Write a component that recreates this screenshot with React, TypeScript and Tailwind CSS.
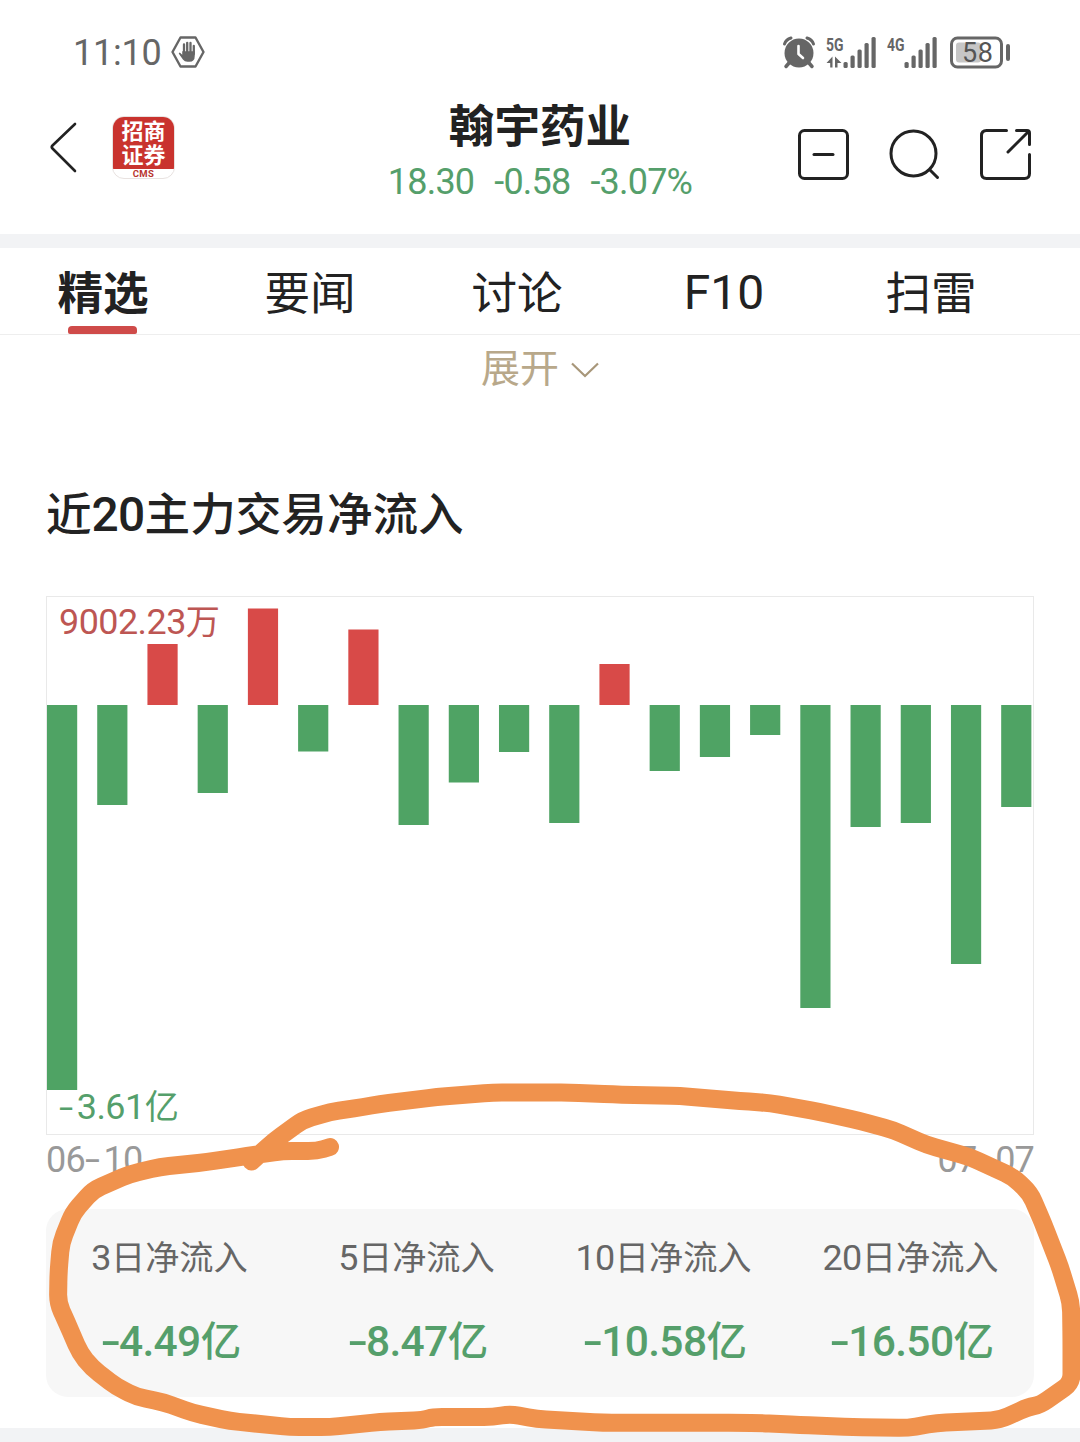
import { ReactNode } from "react";

const TABS = ["精选", "要闻", "讨论", "F10", "扫雷"];

// Signed bar heights in px, positive = inflow
const FLOWS = [
  -385, -100, 61, -88, 96.5, -46.5, 75.5, -120, -77.5, -47, -118, 41, -66, -52, -30, -303, -122,
  -118, -259, -102,
];

const SUMMARY = [
  { days: "3", value: "4.49" },
  { days: "5", value: "8.47" },
  { days: "10", value: "10.58" },
  { days: "20", value: "16.50" },
];

const MARK: [number, number][] = [
  [251.5, 1161.5], [274, 1141], [303, 1120], [330, 1112], [363, 1107], [380, 1104], [437, 1097],
  [493, 1092.5], [570, 1092.5], [613, 1094.5], [680, 1096], [740, 1101], [770, 1103], [820, 1112],
  [860, 1121], [893, 1130], [927, 1145], [970, 1157], [1013, 1177], [1030, 1193], [1043, 1223],
  [1060, 1267], [1071, 1303], [1071.5, 1340], [1071.5, 1383], [1040, 1405], [1028, 1407],
  [1000, 1420], [937, 1423], [907, 1428], [853, 1427], [800, 1425], [760, 1423], [720, 1422.7],
  [603, 1422.7], [537, 1419], [510, 1414], [493, 1417], [433, 1417], [423, 1420], [380, 1422],
  [330, 1427], [290, 1427], [230, 1421], [193, 1413], [163, 1402], [137, 1397], [117, 1387],
  [92, 1368], [80, 1353], [67, 1323], [58, 1303], [58.5, 1273], [61, 1243], [73, 1213],
  [93, 1190], [130, 1174], [160, 1167], [207, 1162], [247, 1156], [283, 1151], [317, 1151],
  [330, 1147],
];

// Joins the points with straight runs and rounds each corner by up to 9px
function smooth(points: [number, number][]) {
  const toward = (a: [number, number], b: [number, number]) => {
    const len = Math.hypot(b[0] - a[0], b[1] - a[1]);
    const t = Math.min(9, len / 2) / len;
    return `${a[0] + (b[0] - a[0]) * t} ${a[1] + (b[1] - a[1]) * t}`;
  };
  let d = `M${points[0].join(" ")}`;
  for (let i = 1; i < points.length - 1; i++) {
    const p = points[i];
    d += ` L${toward(p, points[i - 1])} Q${p.join(" ")} ${toward(p, points[i + 1])}`;
  }
  return `${d} L${points[points.length - 1].join(" ")}`;
}

// Digits are set slightly larger than the Chinese text beside them
function Num({ children }: { children: ReactNode }) {
  return <span className="text-[1.05em] tracking-[-0.015em]">{children}</span>;
}

// Wide minus sign used in the chart and the summary figures
function Minus() {
  return <span className="mr-[0.1em] inline-block w-[0.42em] origin-left scale-x-150">-</span>;
}

function Signal({ label, data }: { label: string; data?: boolean }) {
  return (
    <svg className="overflow-visible" width="52" height="34" viewBox="0 0 52 34" fill="#666">
      <text
        x="0"
        y="14.500"
        fontSize="18"
        fontWeight="700"
        textLength="17.500"
        lengthAdjust="spacingAndGlyphs"
      >
        {label}
      </text>
      {data && (
        <path d="M6.500 20.500 V31.500 H4.200 V27 H0.500 Z M9 20.500 L15.500 27 H11.500 V31.500 H9 Z" />
      )}
      <rect x="17.500" y="26" width="4.200" height="6" rx="1.500" />
      <rect x="24.500" y="19.500" width="4.200" height="12.500" rx="1.500" />
      <rect x="31.500" y="13.500" width="4.200" height="18.500" rx="1.500" />
      <rect x="38.500" y="7" width="4.200" height="25" rx="1.500" />
      <rect x="45.500" y="1" width="4.200" height="31" rx="1.500" />
    </svg>
  );
}

function StatusBar() {
  return (
    <div className="flex h-[90px] items-start pt-9 pl-[73px] text-[#666]">
      <span className="w-[98px] text-[36px] leading-[34px] tracking-[-0.2px]">11:10</span>
      <svg width="34" height="32" viewBox="0 0 34 32">
        <path
          d="M9.500 1.500 H24.500 L32.500 16 L24.500 30.500 H9.500 L1.500 16 Z"
          fill="none"
          stroke="#666"
          strokeWidth="2.400"
          strokeLinejoin="round"
        />
        <g stroke="#666" strokeWidth="2.300" strokeLinecap="round" fill="#666">
          <path d="M13 8.500 V18 M16.200 6.800 V17 M19.500 7 V17 M22.800 10 V18" />
          <path d="M8.300 17 L12 20.500 V16 H23 V20 Q23 25 18.500 25 H16.500 Q14 25 12.500 23 Z" strokeWidth="1.500" />
        </g>
      </svg>
      <svg className="ml-[577px]" width="34" height="34" viewBox="0 0 34 34">
        <circle cx="17" cy="17" r="14.500" fill="#666" />
        <path d="M2.500 8 Q4 3.500 9 2 M25 2 Q30 3.500 31.500 8" fill="none" stroke="#666" strokeWidth="3" strokeLinecap="round" />
        <path d="M7 27 L4 30.500 M27 27 L30 30.500" stroke="#666" strokeWidth="3.500" strokeLinecap="round" />
        <path d="M16.500 10 V18 L21 22" fill="none" stroke="#fff" strokeWidth="2.600" strokeLinecap="round" strokeLinejoin="round" />
      </svg>
      <div className="ml-[10px] flex gap-[9px]">
        <Signal label="5G" data />
        <Signal label="4G" />
      </div>
      <svg className="ml-[11px]" width="62" height="34" viewBox="0 0 62 34">
        <rect x="1.500" y="2" width="50" height="29" rx="6" fill="none" stroke="#666" strokeWidth="3" />
        <rect x="6" y="6.500" width="25" height="20" rx="3" fill="#c6c6c6" />
        <rect x="56" y="8" width="4" height="17" rx="2" fill="#666" />
        <text x="12" y="26" fontSize="27" fill="#555" textLength="31">
          58
        </text>
      </svg>
    </div>
  );
}

function Header() {
  return (
    <header className="flex h-36 items-start">
      <div className="flex w-[360px] pt-[26px] pl-[49px]">
        <svg className="mt-[5px]" width="30" height="54" viewBox="0 0 30 54">
          <path d="M26 3 L3.500 24.500 Q2 26 3.500 27.500 L26 50" fill="none" stroke="#222" strokeWidth="2.600" strokeLinecap="round" />
        </svg>
        <div className="ml-[33px] h-[63px] w-[63px] overflow-hidden rounded-[12px] border border-[#e8e2e0] bg-white">
          <div className="-mx-px -mt-px h-[53px] bg-[#c9332e] pt-1 text-center text-[22px] leading-[23.500px] font-bold text-white">
            <div>招商</div>
            <div>证券</div>
          </div>
          <div className="text-center text-[9.500px] leading-[9px] font-bold tracking-[0.3px] text-[#b8352f]">
            CMS
          </div>
        </div>
      </div>
      <div className="flex w-[360px] flex-col items-center pt-[14px]">
        <h1 className="text-[45.6px] leading-[48px] font-bold">翰宇药业</h1>
        <div className="mt-[9px] flex gap-[20px] text-[36px] leading-[42px] tracking-[-0.8px] whitespace-nowrap text-[#559f6b]">
          <span>18.30</span>
          <span>-0.58</span>
          <span>
            -3.07<span className="text-[36px]">%</span>
          </span>
        </div>
      </div>
      <svg className="mt-9 ml-[76px]" width="240" height="58" viewBox="0 0 240 58" fill="none" stroke="#222" strokeWidth="3" strokeLinecap="round" strokeLinejoin="round">
        <rect x="3.500" y="4.500" width="48" height="48" rx="5" />
        <path d="M18 28.500 H37" />
        <circle cx="117.500" cy="27.500" r="22.500" />
        <path d="M134 44 L141.500 51.500" />
        <path d="M210.500 4.500 H190.500 Q185.500 4.500 185.500 9.500 V47.500 Q185.500 52.500 190.500 52.500 H228.500 Q233.500 52.500 233.500 47.500 V28.500" />
        <path d="M220.500 4.500 H231 Q233.500 4.500 233.500 7 V18.500 M232 6 L212 26" />
      </svg>
    </header>
  );
}

function Tabs() {
  return (
    <nav className="flex h-[87px] border-b border-[#eee]">
      {TABS.map((tab, i) => (
        <div key={tab} className="-ml-px flex w-[208px] flex-col items-center">
          {i === 0 ? (
            <>
              <span className="h-[78px] pt-[11px] text-[45.6px] leading-[72px] font-bold">
                {tab}
              </span>
              <span className="mr-[2px] h-2 w-[69px] rounded-t-[4px] rounded-b-[2px] bg-[#cf4b49]" />
            </>
          ) : (
            <span
              className={
                tab === "F10"
                  ? "pt-[9px] text-[48px] leading-[72px]"
                  : "pt-[11px] text-[45.6px] leading-[72px]"
              }
            >
              {tab}
            </span>
          )}
        </div>
      ))}
    </nav>
  );
}

function FlowChart() {
  return (
    <div className="relative mx-[46px] h-[539px] border border-[#e9e9e9]">
      <svg className="block" width="986" height="537" viewBox="0 0 986 537">
        {FLOWS.map((v, i) => (
          <rect
            key={i}
            x={i * 50.22}
            y={v > 0 ? 108 - v : 108}
            width="30.200"
            height={Math.abs(v)}
            fill={v > 0 ? "#d84a48" : "#4fa364"}
          />
        ))}
      </svg>
      <span className="absolute top-1 left-3 text-[34.200px] leading-[42px] tracking-[-0.3px] text-[#bd5653]">
        <Num>9002.23</Num>万
      </span>
      <span className="absolute bottom-[6px] left-3 text-[34.200px] leading-[42px] text-[#559f6b]">
        <Minus />
        <Num>3.61</Num>亿
      </span>
    </div>
  );
}

export default function App() {
  return (
    <div className="relative h-[1442px] w-[1080px] overflow-hidden bg-white font-[Roboto,'Noto_Sans_CJK_SC',sans-serif] text-[#222]">
      <StatusBar />
      <Header />
      <div className="h-[14px] bg-[#f2f3f5]" />
      <Tabs />
      <div className="flex h-[68px] items-center justify-center gap-3 text-[39px] text-[#b8a88a]">
        <span className="leading-[60px]">展开</span>
        <svg className="mt-[2px]" width="28" height="16" viewBox="0 0 28 16" fill="none" stroke="#a8977a" strokeWidth="2.200">
          <path d="M1 1.500 L14 14 L27 1.500" />
        </svg>
      </div>
      <h2 className="mt-[77px] mb-[45px] pl-[46px] text-[45.6px] leading-[70px] font-medium">
        近<Num>20</Num>主力交易净流入
      </h2>
      <FlowChart />
      <div className="mx-[46px] flex h-[74px] justify-between pt-px text-[36px] leading-[48px] tracking-[-0.8px] text-[#999]">
        <span>
          06
          <Minus />
          10
        </span>
        <span>
          07
          <Minus />
          07
        </span>
      </div>
      <div className="mx-[46px] grid h-[188px] grid-cols-4 rounded-[22px] bg-[#f7f7f7] pt-[25px] text-center">
        {SUMMARY.map((s) => (
          <div key={s.days}>
            <div className="text-[34.200px] leading-[48px] text-[#666]">
              <Num>{s.days}</Num>日净流入
            </div>
            <div className="mt-8 text-[40.500px] leading-[56px] font-medium text-[#559f6b]">
              <Minus />
              <Num>{s.value}</Num>亿
            </div>
          </div>
        ))}
      </div>
      <div className="mt-[31px] h-[14px] bg-[#f2f3f5]" />
      <svg className="pointer-events-none absolute top-0 left-0" width="1080" height="1442" viewBox="0 0 1080 1442">
        <path d={smooth(MARK)} fill="none" stroke="#f0924d" strokeWidth="18" strokeLinecap="round" strokeLinejoin="round" />
      </svg>
    </div>
  );
}
